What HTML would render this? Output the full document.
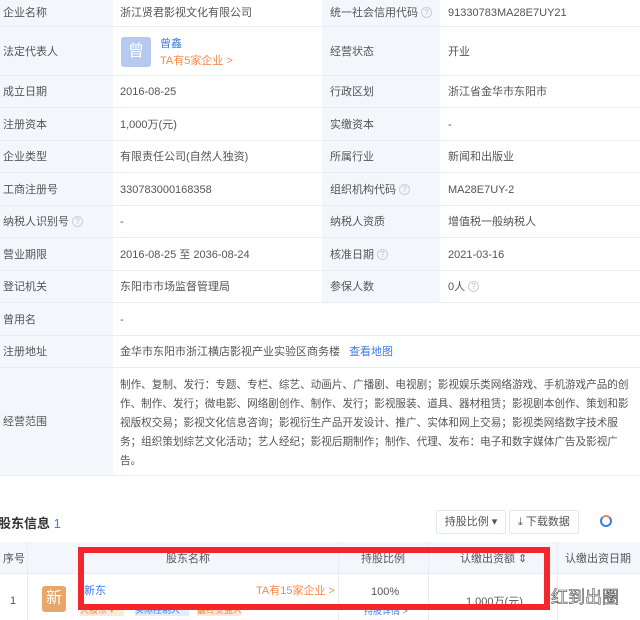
<!DOCTYPE html>
<html><head><meta charset="utf-8"><style>
*{margin:0;padding:0;box-sizing:border-box}
body{width:640px;height:620px;overflow:hidden;background:#fff;position:relative;font-family:"Liberation Sans","Noto Sans CJK SC",sans-serif;font-size:11px;color:#555}
.a{position:absolute;white-space:nowrap;line-height:14px}
.lb{position:absolute;left:0;width:113px;background:#f3f6fb;border-bottom:1px solid #e8edf5}
.vr{position:absolute;left:113px;width:527px;border-bottom:1px solid #e8edf5}
.lb2{position:absolute;left:322px;width:118px;background:#f3f6fb;border-bottom:1px solid #e8edf5}
.q{display:inline-block;width:11px;height:11px;border:1px solid #ccd;border-radius:50%;font-size:8px;text-align:center;line-height:9px;color:#bbc;margin-left:3px;vertical-align:top;margin-top:1px}
.sc{position:absolute;left:120px;white-space:nowrap;font-size:10.6px;line-height:14px;width:520px;overflow:hidden}
</style></head><body>
<div class="lb" style="top:0;height:27px"></div><div class="vr" style="top:0;height:27px"></div><div class="lb2" style="top:0;height:27px"></div>
<div class="lb" style="top:27px;height:49px"></div><div class="vr" style="top:27px;height:49px"></div><div class="lb2" style="top:27px;height:49px"></div>
<div class="lb" style="top:76px;height:32px"></div><div class="vr" style="top:76px;height:32px"></div><div class="lb2" style="top:76px;height:32px"></div>
<div class="lb" style="top:108px;height:33px"></div><div class="vr" style="top:108px;height:33px"></div><div class="lb2" style="top:108px;height:33px"></div>
<div class="lb" style="top:141px;height:32px"></div><div class="vr" style="top:141px;height:32px"></div><div class="lb2" style="top:141px;height:32px"></div>
<div class="lb" style="top:173px;height:33px"></div><div class="vr" style="top:173px;height:33px"></div><div class="lb2" style="top:173px;height:33px"></div>
<div class="lb" style="top:206px;height:32px"></div><div class="vr" style="top:206px;height:32px"></div><div class="lb2" style="top:206px;height:32px"></div>
<div class="lb" style="top:238px;height:33px"></div><div class="vr" style="top:238px;height:33px"></div><div class="lb2" style="top:238px;height:33px"></div>
<div class="lb" style="top:271px;height:32px"></div><div class="vr" style="top:271px;height:32px"></div><div class="lb2" style="top:271px;height:32px"></div>
<div class="lb" style="top:303px;height:33px"></div><div class="vr" style="top:303px;height:33px"></div>
<div class="lb" style="top:336px;height:32px"></div><div class="vr" style="top:336px;height:32px"></div>
<div class="lb" style="top:368px;height:108px"></div><div class="vr" style="top:368px;height:108px"></div>

<div class="a" style="left:3px;top:6px">企业名称</div><div class="a" style="left:120px;top:6px">浙江贤君影视文化有限公司</div><div class="a" style="left:330px;top:6px">统一社会信用代码<span class="q">?</span></div><div class="a" style="left:448px;top:6px">91330783MA28E7UY21</div>
<div class="a" style="left:3px;top:45px">法定代表人</div>
<div class="a" style="left:121px;top:37px;width:30px;height:30px;background:#b6c9ef;border-radius:3px;color:#fff;font-size:16px;text-align:center;line-height:30px">曾</div>
<div class="a" style="left:160px;top:37px;color:#3b7ce6">曾鑫</div><div class="a" style="left:160px;top:54px;color:#f08a4b">TA有5家企业 &gt;</div>
<div class="a" style="left:330px;top:45px">经营状态</div><div class="a" style="left:448px;top:45px">开业</div>
<div class="a" style="left:3px;top:85px">成立日期</div><div class="a" style="left:120px;top:85px">2016-08-25</div><div class="a" style="left:330px;top:85px">行政区划</div><div class="a" style="left:448px;top:85px">浙江省金华市东阳市</div>
<div class="a" style="left:3px;top:118px">注册资本</div><div class="a" style="left:120px;top:118px">1,000万(元)</div><div class="a" style="left:330px;top:118px">实缴资本</div><div class="a" style="left:448px;top:118px">-</div>
<div class="a" style="left:3px;top:150px">企业类型</div><div class="a" style="left:120px;top:150px">有限责任公司(自然人独资)</div><div class="a" style="left:330px;top:150px">所属行业</div><div class="a" style="left:448px;top:150px">新闻和出版业</div>
<div class="a" style="left:3px;top:183px">工商注册号</div><div class="a" style="left:120px;top:183px">330783000168358</div><div class="a" style="left:330px;top:183px">组织机构代码<span class="q">?</span></div><div class="a" style="left:448px;top:183px">MA28E7UY-2</div>
<div class="a" style="left:3px;top:215px">纳税人识别号<span class="q">?</span></div><div class="a" style="left:120px;top:215px">-</div><div class="a" style="left:330px;top:215px">纳税人资质</div><div class="a" style="left:448px;top:215px">增值税一般纳税人</div>
<div class="a" style="left:3px;top:248px">营业期限</div><div class="a" style="left:120px;top:248px">2016-08-25 至 2036-08-24</div><div class="a" style="left:330px;top:248px">核准日期<span class="q">?</span></div><div class="a" style="left:448px;top:248px">2021-03-16</div>
<div class="a" style="left:3px;top:280px">登记机关</div><div class="a" style="left:120px;top:280px">东阳市市场监督管理局</div><div class="a" style="left:330px;top:280px">参保人数</div><div class="a" style="left:448px;top:280px">0人<span class="q">?</span></div>
<div class="a" style="left:3px;top:313px">曾用名</div><div class="a" style="left:120px;top:313px">-</div>
<div class="a" style="left:3px;top:345px">注册地址</div><div class="a" style="left:120px;top:345px">金华市东阳市浙江横店影视产业实验区商务楼 <span style="color:#3b7ce6;margin-left:6px">查看地图</span></div>
<div class="a" style="left:3px;top:415px">经营范围</div>
<div class="sc" style="top:378px">制作、复制、发行：专题、专栏、综艺、动画片、广播剧、电视剧；影视娱乐类网络游戏、手机游戏产品的创</div>
<div class="sc" style="top:397px">作、制作、发行；微电影、网络剧创作、制作、发行；影视服装、道具、器材租赁；影视剧本创作、策划和影</div>
<div class="sc" style="top:416px">视版权交易；影视文化信息咨询；影视衍生产品开发设计、推广、实体和网上交易；影视类网络数字技术服</div>
<div class="sc" style="top:435px">务；组织策划综艺文化活动；艺人经纪；影视后期制作；制作、代理、发布：电子和数字媒体广告及影视广</div>
<div class="sc" style="top:454px">告。</div>

<div class="a" style="left:-2px;top:516px;font-size:13px;font-weight:bold;color:#333;line-height:16px">股东信息 <span style="color:#3b7ce6;font-weight:normal">1</span></div>
<div class="a" style="left:436px;top:510px;width:70px;height:24px;border:1px solid #e4e8ee;border-radius:2px;text-align:center;line-height:22px;background:#fff">持股比例 ▾</div>
<div class="a" style="left:509px;top:510px;width:70px;height:24px;border:1px solid #e4e8ee;border-radius:2px;line-height:22px;padding-left:8px;background:#fff">⤓ 下载数据</div>
<div class="a" style="left:600px;top:515px;width:12px;height:12px;border-radius:50%;border:2px solid #3b7ce6;border-top-color:#f08a4b"></div>

<div class="a" style="left:0;top:542px;width:640px;height:32px;background:#f3f6fb;border-bottom:1px solid #e8edf5"></div>
<div class="a" style="left:27px;top:542px;width:1px;height:78px;background:#e8edf5"></div>
<div class="a" style="left:338px;top:542px;width:1px;height:78px;background:#e8edf5"></div>
<div class="a" style="left:428px;top:542px;width:1px;height:78px;background:#e8edf5"></div>
<div class="a" style="left:557px;top:542px;width:1px;height:78px;background:#e8edf5"></div>
<div class="a" style="left:3px;top:552px">序号</div>
<div class="a" style="left:166px;top:552px">股东名称</div>
<div class="a" style="left:361px;top:552px">持股比例</div>
<div class="a" style="left:460px;top:552px">认缴出资额 ⇕</div>
<div class="a" style="left:565px;top:552px">认缴出资日期</div>
<div class="a" style="left:10px;top:594px">1</div>
<div class="a" style="left:42px;top:586px;width:24px;height:26px;background:#e9a66a;border-radius:3px;color:#fff;font-size:16px;text-align:center;line-height:26px">新</div>
<div class="a" style="left:84px;top:584px;color:#3b7ce6">新东</div>
<div class="a" style="left:256px;top:584px;color:#f08a4b">TA有15家企业 &gt;</div>
<div class="a" style="left:80px;top:604px;width:44px;height:12px;background:#fbeadb;color:#f08a4b;font-size:9px;line-height:12px">大股东 ▾</div>
<div class="a" style="left:135px;top:604px;width:54px;height:12px;background:#e4edfb;color:#3b7ce6;font-size:9px;line-height:12px">实际控制人</div>
<div class="a" style="left:197px;top:604px;width:44px;height:12px;background:#fbeadb;color:#f08a4b;font-size:9px;line-height:12px">最终受益人</div>
<div class="a" style="left:371px;top:585px">100%</div>
<div class="a" style="left:364px;top:604px;color:#3b7ce6;font-size:9px">持股详情 &gt;</div>
<div class="a" style="left:466px;top:595px">1,000万(元)</div>
<div class="a" style="left:551px;top:588px;font-size:17px;line-height:20px;color:#fff;-webkit-text-stroke:0.6px #444">红到出圈</div>

<div class="a" style="left:78px;top:547px;width:472px;height:63px;border:6px solid #f2262b"></div>
</body></html>
